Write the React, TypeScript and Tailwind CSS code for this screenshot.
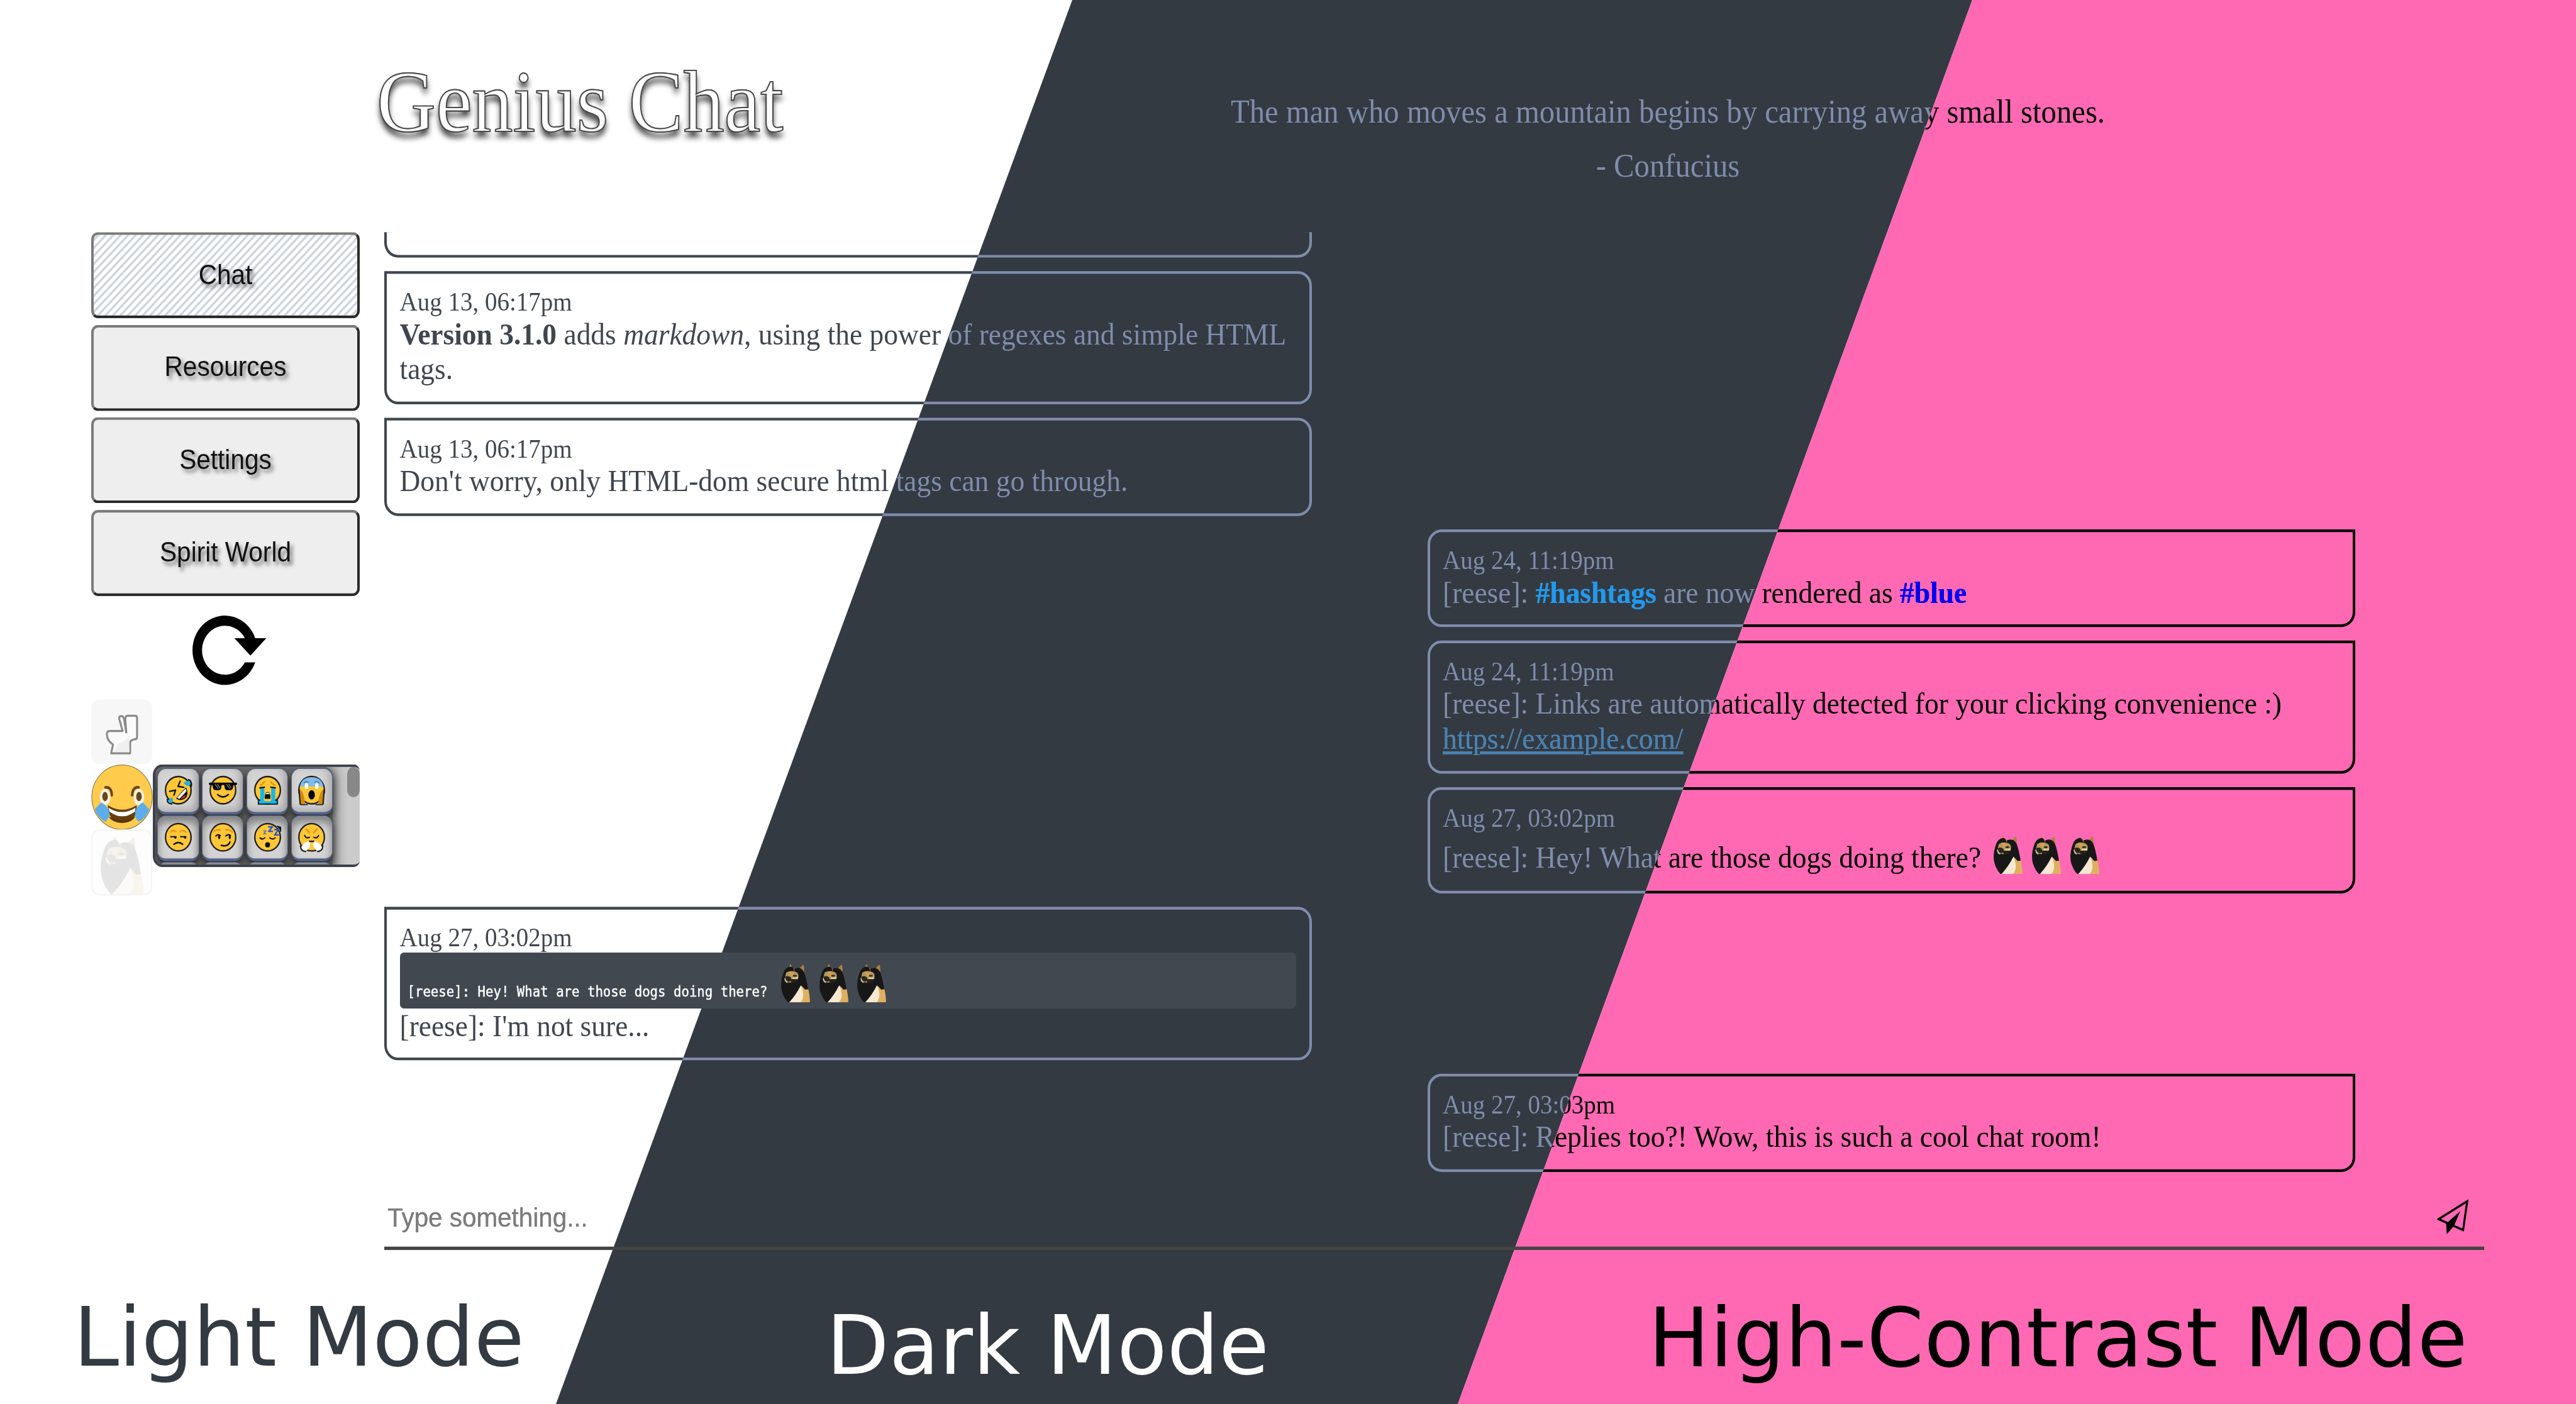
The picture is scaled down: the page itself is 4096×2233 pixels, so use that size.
import React from "react";

type Theme = { page: string; line: string; clip: string };

const THEMES: Theme[] = [
  {
    page: "bg-white",
    line: "border-[#40464e]",
    clip: "[clip-path:polygon(0_0,1705px_0,884px_100%,0_100%)]",
  },
  {
    page: "bg-[#343a42]",
    line: "border-[#7f8dac]",
    clip: "[clip-path:polygon(1705px_0,3136px_0,2318px_100%,884px_100%)]",
  },
  {
    page: "bg-[#ff69b4]",
    line: "border-black",
    clip: "[clip-path:polygon(3136px_0,100%_0,100%_100%,2318px_100%)]",
  },
];

/* ---------- drawings ---------- */

function Dog({ className }: { className: string }) {
  return (
    <svg viewBox="70 66 204 252" preserveAspectRatio="none" className={className}>
      <path d="M128 92 L140 66 L152 90Z" fill="#b98f45" />
      <path d="M196 98 L222 70 Q230 74 230 118Z" fill="#b07f3a" />
      <path d="M130 318 Q165 280 206 205 L232 240 L218 318Z" fill="#f4e8d2" />
      <path d="M210 200 L238 232 L257 232 Q268 285 267 318 L206 318 Q232 285 220 240Z" fill="#e0b060" />
      <path
        d="M142 82 Q104 84 90 135 Q70 195 84 248 Q98 294 124 318 L132 316 Q178 266 208 204 L236 234 L255 230 Q244 160 229 120 Q214 90 186 92 Q168 94 161 102 Q156 84 142 82Z"
        fill="#171717"
      />
      <path d="M112 122 Q135 108 165 114 Q193 120 192 145 Q191 172 172 182 Q140 194 114 182 Q102 168 106 145Z" fill="#b5975c" />
      <path d="M128 114 L160 114 L158 144 L140 148Z" fill="#cfa050" />
      <path d="M104 150 Q125 138 142 154 Q152 176 130 182 Q108 180 104 150Z" fill="#2a2722" />
      <path d="M138 168 Q165 160 192 166 Q182 190 146 192Z" fill="#26221c" />
      <ellipse cx="168" cy="143" rx="13" ry="6" fill="#33291a" />
      <path d="M100 160 Q100 184 122 192 L118 182 Q106 176 106 156Z" fill="#ddd1a4" />
      <path d="M156 151 Q172 158 190 148 L188 163 Q170 166 152 163Z" fill="#ddd1a4" />
      <path d="M161 92 L164 112" stroke="#9b7a3c" strokeWidth="4" />
    </svg>
  );
}

function Dogs() {
  return (
    <>
      {[0, 1, 2].map((i) => (
        <span key={i} className="ml-[11.3px] inline-block h-[45px] w-[49.5px] align-[-8.5px]">
          <Dog className="-mt-[12px] block h-[57px] w-[49.5px]" />
        </span>
      ))}
    </>
  );
}

function RefreshIcon() {
  return (
    <svg viewBox="0 0 120 103" className="h-[103px] w-[120px] overflow-visible">
      <path
        d="M99.8 33.5 A51.5 51.5 0 1 0 99.8 69.5 L83.3 69.5 A36.4 36.4 0 1 1 83.3 33.5 L66.6 33.5 L92.2 59.5 L117.5 33.5Z"
        fill="#000"
      />
    </svg>
  );
}

function ToiletIcon() {
  return (
    <svg viewBox="0 0 100 100" className="size-full">
      <path
        d="M57.7 52 L56 30 Q56 25 60 25 L72 25 Q75.5 25 75.5 29 L75.5 58 Q75.5 61 71 61.5 Q64 62.500 64 67 L64 83 L32.500 83 L35.600 69.500 Q25.500 63 25.500 54 Q25 48.500 30 48.500 L51.500 48.500 L46 30 Q45 25.500 49 25.500 Q53 25 54 31 L57.700 52"
        fill="#fafafa"
        stroke="#8a8a8a"
        strokeWidth="3.200"
        strokeLinejoin="round"
      />
      <path d="M44 68 Q56 66 62 56 L63 81 L37 81Z" fill="#f0f0f0" />
    </svg>
  );
}

function LaughFace() {
  return (
    <svg viewBox="0 0 100 100" className="size-full">
      <circle cx="50" cy="50" r="49" fill="#ffcb4c" stroke="#8f7f58" strokeWidth="1.200" />
      <path d="M23 35 Q33 34 33.500 47" fill="none" stroke="#65471b" strokeWidth="4" strokeLinecap="round" />
      <path d="M77 35 Q67 34 66.500 47" fill="none" stroke="#65471b" strokeWidth="4" strokeLinecap="round" />
      <ellipse cx="22.500" cy="50" rx="8.500" ry="12.500" fill="#f5f0e2" />
      <ellipse cx="77.500" cy="50" rx="8.500" ry="12.500" fill="#f5f0e2" />
      <ellipse cx="22.500" cy="49" rx="4.500" ry="7" fill="#65471b" />
      <ellipse cx="77.500" cy="49" rx="4.500" ry="7" fill="#65471b" />
      <path d="M27 62 Q50 76 74 62 Q74 89 50 89 Q28 89 27 62Z" fill="#65400c" />
      <path d="M28 66 Q50 79 72 66 L71 72 Q50 86 30 72Z" fill="#fff" />
      <path d="M28 79 Q50 91 72 79 Q66 89 50 89 Q34 89 28 79Z" fill="#5a3604" />
      <path d="M16 58 L6 68 Q10 80 22 87 Q30 84 29.500 72 Q25 61 16 58Z" fill="#5dadec" />
      <path d="M84 58 L94 68 Q90 80 78 87 Q70 84 71.500 72 Q75 61 84 58Z" fill="#5dadec" />
    </svg>
  );
}

const FACE = "#ffc636";

function Face({ children }: { children: React.ReactNode }) {
  return (
    <svg viewBox="10 10 52 52" className="h-[45px] w-[45px]" fill="none" strokeLinecap="round" strokeLinejoin="round">
      <circle cx="36" cy="36" r="23.5" fill={FACE} stroke="#1c1c1c" strokeWidth="2.6" />
      {children}
    </svg>
  );
}

const EMOJIS: React.ReactNode[] = [
  <Face>
    <path d="M39.500 20.500 L35.500 29.500 L46 31 M20 38 L31 36 L28 44.500" stroke="#111" strokeWidth="2.600" />
    <path d="M33.500 50 L50 32.500 Q55 45 47 50 Q40 54 33.500 50Z" fill="#111" stroke="#111" strokeWidth="2" />
    <path d="M34 49 L49.500 33 L51 38 L38 51Z" fill="#fff" />
    <path d="M41 51 Q44 45 50 45 Q48 51 41 51Z" fill="#d22f27" />
    <path d="M46 24 Q52 18 57 21 Q60 26 55 29 Q50 29 46 24Z" fill="#1ab2e8" />
    <path d="M55 18 Q61 20 60 29" stroke="#111" strokeWidth="2.500" />
    <path d="M25 48 Q27 55 24 58 Q19 58 18 54 Q20 50 25 48Z" fill="#1ab2e8" />
    <path d="M16 52 Q15 59 24 59.500" stroke="#111" strokeWidth="2.500" />
  </Face>,
  <Face>
    <path d="M12 25 L60 25" stroke="#000" strokeWidth="4" />
    <path d="M16 25 H34 L32.500 33 Q31.500 36 28 36 H23 Q19 36 18 33Z M38 25 H56 L54 33 Q53 36 49 36 H44 Q40.500 36 39.500 33Z" fill="#000" />
    <path d="M22 26 L27 33 M26 26 L30 32 M43 26 L48 33 M47 26 L51 32" stroke="#777" strokeWidth="1.600" />
    <path d="M26 43.500 Q36 52 46 43.500" stroke="#111" strokeWidth="2.600" />
  </Face>,
  <Face>
    <path d="M23 27 Q27 26 30 22 M49 27 Q45 26 42 22" stroke="#e08f1c" strokeWidth="2.500" />
    <path d="M19 53 L54 53 L54 60 L19 60Z" fill="#00b5ea" stroke="#111" strokeWidth="2" />
    <rect x="22.500" y="33" width="7.500" height="26" fill="#12b9ee" />
    <rect x="42.500" y="33" width="7.500" height="26" fill="#12b9ee" />
    <path d="M29 54 Q36 57 43 54 L43 50 L29 50Z" fill={FACE} />
    <path d="M22 32 L30 31 M50 32 L42 31" stroke="#111" strokeWidth="2.600" />
    <path d="M31 51 Q30 39 36 39 Q42 39 41 51Z" fill="#111" />
    <path d="M33 42 Q36 39 39 42Z" fill="#fff" stroke="#fff" strokeWidth="1" />
  </Face>,
  <Face>
    <path d="M14 31 Q17 13.500 36 13.500 Q55 13.500 58 31 Q47 27 36 30 Q25 27 14 31Z" fill="#80bbea" />
    <path d="M13.500 34 Q22 38 24 60 L15 60Z M58.500 34 Q50 38 48 60 L57 60Z" fill="#d28a08" />
    <path d="M13 36 L15 60 M59 36 L57 60" stroke="#1c1c1c" strokeWidth="2.500" />
    <path d="M16 61 H28 M44 61 H56" stroke="#1c1c1c" strokeWidth="2" />
    <rect x="23.500" y="24" width="6" height="10" rx="2" fill="#fff" />
    <rect x="42.500" y="24" width="6" height="10" rx="2" fill="#fff" />
    <path d="M22 24 Q26 19 30 23 M42 23 Q46 19 50 24" stroke="#2c78b8" strokeWidth="1.600" />
    <ellipse cx="36" cy="44" rx="6" ry="8" fill="#000" />
  </Face>,
  <Face>
    <path d="M22 27 Q26 23 32 26 M50 27 Q46 23 40 26" stroke="#e39a1e" strokeWidth="2.800" />
    <path d="M22 35 L32 35 M40 35 L50 35" stroke="#111" strokeWidth="2.200" />
    <path d="M28 35 L32 35 L32 38 Q29 39 28 35Z M46 35 L50 35 L50 38 Q47 39 46 35Z" fill="#111" stroke="#111" strokeWidth="1" />
    <path d="M28 48 Q36 42 44 48" stroke="#111" strokeWidth="2.700" />
  </Face>,
  <Face>
    <path d="M19 27 Q24 21 31 24 M53 27 Q48 21 41 24" stroke="#e39a1e" strokeWidth="2.800" />
    <path d="M23 34 Q26 30 31 33 M41 34 Q45 30 50 33" stroke="#111" strokeWidth="2.300" />
    <ellipse cx="29" cy="36" rx="2" ry="3.200" fill="#111" />
    <ellipse cx="48.500" cy="36" rx="2" ry="3.200" fill="#111" />
    <path d="M33 50 Q45 53 49 44" stroke="#111" strokeWidth="2.700" />
  </Face>,
  <Face>
    <path d="M22 37 Q26 41 31 37 M40 37 Q45 41 50 37" stroke="#111" strokeWidth="2.300" />
    <circle cx="36" cy="49" r="4.500" fill="#111" />
    <path d="M54 17 L60 19 L60 26" fill="#111" stroke="#111" strokeWidth="2" />
    <path d="M29 25 H33 L29 30 H33" stroke="#5d7ca8" strokeWidth="2" />
    <path d="M38 18 H45 L38 26 H45" stroke="#2351e0" strokeWidth="2.600" />
    <path d="M49 23 H56 L49 32 H56" stroke="#2351e0" strokeWidth="2.600" />
  </Face>,
  <Face>
    <path d="M26 22 L32 28 M46 22 L40 28" stroke="#e08f1c" strokeWidth="2.600" />
    <path d="M23 33 Q26 39 32 36 M49 33 Q46 39 40 36" stroke="#111" strokeWidth="2.300" />
    <path d="M32 43 H40" stroke="#111" strokeWidth="2.600" />
    <path d="M31 43 L34 48 Q31 58 24 60 Q17 58 17 53 Q21 45 31 43Z" fill="#fff" />
    <path d="M41 43 L38 48 Q41 58 48 60 Q55 58 55 53 Q51 45 41 43Z" fill="#fff" />
    <path d="M15.500 51 Q16 60 25 60.500 M56.500 51 Q56 60 47 60.500" stroke="#1c1c1c" strokeWidth="2.400" />
  </Face>,
];

function SendIcon() {
  return (
    <svg viewBox="0 0 51 51" preserveAspectRatio="none" className="h-[52px] w-[51px]">
      <path d="M2.500 28.500 L48 2.500 L41.500 44.500Z" fill="none" stroke="#000" strokeWidth="3.200" strokeLinejoin="miter" />
      <path d="M14.500 35 L37 17 L27 38.500 L15.500 50.500Z" fill="#000" />
    </svg>
  );
}

/* ---------- messages ---------- */

type Message = { height: string; side: "left" | "right"; body: React.ReactNode };

function Line({ children, className = "" }: { children: React.ReactNode; className?: string }) {
  return <p className={"text-[45.46px] leading-[52.3px] " + className}>{children}</p>;
}

function Time({ children }: { children: string }) {
  return <p className="text-[39px] leading-[44px]">{children}</p>;
}

const MESSAGES: Message[] = [
  {
    height: "h-[198px]",
    side: "left",
    body: (
      <>
        <Time>Aug 13, 06:17pm</Time>
        <Line>
          <b>Version 3.1.0</b> adds <i>markdown</i>, using the power of regexes and simple HTML tags.
        </Line>
      </>
    ),
  },
  {
    height: "h-[145.6px]",
    side: "left",
    body: (
      <>
        <Time>Aug 13, 06:17pm</Time>
        <Line>Don't worry, only HTML-dom secure html tags can go through.</Line>
      </>
    ),
  },
  {
    height: "h-[145.6px]",
    side: "right",
    body: (
      <>
        <Time>Aug 24, 11:19pm</Time>
        <Line>
          [reese]: <b className="text-[#1d9bf0]">#hashtags</b> are now rendered as{" "}
          <b className="text-[#0000ff]">#blue</b>
        </Line>
      </>
    ),
  },
  {
    height: "h-[197.6px]",
    side: "right",
    body: (
      <>
        <Time>Aug 24, 11:19pm</Time>
        <Line>[reese]: Links are automatically detected for your clicking convenience :)</Line>
        <Line>
          <a className="text-[#4682b4] underline decoration-[4px] underline-offset-[4px]">https://example.com/</a>
        </Line>
      </>
    ),
  },
  {
    height: "h-[158px]",
    side: "right",
    body: (
      <>
        <Time>Aug 27, 03:02pm</Time>
        <Line className="mt-[11.5px] whitespace-nowrap">
          [reese]: Hey! What are those dogs doing there?
          <span className="ml-[7px]" />
          <Dogs />
        </Line>
      </>
    ),
  },
  {
    height: "h-[228.6px]",
    side: "left",
    body: (
      <>
        <Time>Aug 27, 03:02pm</Time>
        <p className="mr-px h-[83px] rounded-[6px] bg-[#414850] pt-[29px] pl-[12px] font-['DejaVu_Sans_Mono',monospace] text-[20.7px] leading-[48px] whitespace-nowrap text-white [-webkit-text-stroke:0.4px_white]">
          [reese]: Hey! What are those dogs doing there?
          <span className="ml-[8px]" />
          <Dogs />
        </p>
        <Line>[reese]: I'm not sure...</Line>
      </>
    ),
  },
  {
    height: "h-[145.6px]",
    side: "right",
    body: (
      <>
        <Time>Aug 27, 03:03pm</Time>
        <Line>[reese]: Replies too?! Wow, this is such a cool chat room!</Line>
      </>
    ),
  },
];

/* The thread is laid out twice: as bare frames inside each theme, and as text over all of them. */
function Thread({ line }: { line?: string }) {
  const border = line ?? "border-transparent";
  return (
    <div className="flex w-[3133.5px] flex-col gap-[20px]">
      <div className={"h-[38px] w-[1475px] rounded-b-[22px] border-4 border-t-0 " + border} />
      {MESSAGES.map((m, i) => (
        <div
          key={i}
          className={[
            "w-[1475px] border-4 pt-[20px] pr-[20px] pl-[20.5px]",
            m.height,
            m.side === "left"
              ? "self-start rounded-[22px] rounded-tl-none"
              : "self-end rounded-[22px] rounded-tr-none",
            border,
          ].join(" ")}
        >
          {line ? null : m.body}
        </div>
      ))}
    </div>
  );
}

function ThemePane({ theme }: { theme: Theme }) {
  return (
    <div className={"absolute inset-0 pt-[345px] pl-[611px] " + theme.page + " " + theme.clip}>
      <Thread line={theme.line} />
    </div>
  );
}

/* ---------- sidebar ---------- */

function NavButton({ label, active }: { label: string; active?: boolean }) {
  return (
    <button
      className={
        "h-[128px] w-[427px] rounded-[11px] border-[4.3px] border-t-[#7b7b7b] border-r-[#2b2b2b] border-b-[#2b2b2b] border-l-[#7b7b7b] pb-[2px] text-[40.6px] text-[#111] [text-shadow:4px_5px_6px_rgba(0,0,0,0.55)] " +
        (active
          ? "bg-[repeating-linear-gradient(-45deg,#ffffff_0,#ffffff_3.6px,#cdd4e1_5px,#cdd4e1_7px,#ffffff_8.4px)]"
          : "bg-[#eeeeee]")
      }
    >
      {label}
    </button>
  );
}

function EmojiPanel() {
  return (
    <div className="flex h-[153px] w-[329px] overflow-hidden rounded-l-[16px] rounded-r-[10px] border-[4.5px] border-r-0 border-[#3a414b] bg-[#c9c9c9]">
      <div className="flex-1">
        <div className="grid h-[160px] w-[282px] grid-cols-4 gap-x-[4.5px] gap-y-px rounded-r-[14px] bg-[#6a6a6a] pt-[2px] pl-[3px] shadow-[4px_0_16px_rgba(0,0,0,0.55)]">
          {EMOJIS.map((e, i) => (
            <div
              key={i}
              className={
                "flex h-[68.5px] w-[66.500px] items-center justify-center rounded-[14px] border border-b-[4px] border-[#56668c] bg-[#d3d3d3] " +
                (i < 4
                  ? "shadow-[0_6px_12px_rgba(0,0,0,0.65),inset_-5px_-4px_12px_rgba(0,0,0,0.2)]"
                  : "shadow-[0_6px_12px_rgba(0,0,0,0.65),inset_0_9px_12px_rgba(0,0,0,0.4)]")
              }
            >
              {e}
            </div>
          ))}
          {[0, 1, 2, 3].map((i) => (
            <div key={i} className="h-[20px] w-[66.5px] rounded-t-[14px] border border-[#56668c] bg-[#8b8b8b]" />
          ))}
        </div>
      </div>
      <div className="w-[20px] bg-[#cbcbcb]">
        <div className="h-[45px] rounded-[10px] bg-[#888888]" />
      </div>
    </div>
  );
}

function Sidebar() {
  return (
    <aside className="flex w-[427px] flex-col font-['Liberation_Sans',Arial,sans-serif]">
      <nav className="flex flex-col gap-[9.7px]">
        <NavButton label="Chat" active />
        <NavButton label="Resources" />
        <NavButton label="Settings" />
        <NavButton label="Spirit World" />
      </nav>
      <div className="mt-[29px] pl-[161px]">
        <RefreshIcon />
      </div>
      <div className="mt-[22px] h-[96px] w-[97px] rounded-[13px] bg-[#f7f7f7]">
        <ToiletIcon />
      </div>
      <div className="flex">
        <div className="size-[98px]">
          <LaughFace />
        </div>
        <EmojiPanel />
      </div>
      <div className="-mt-[56px] h-[98px] w-[97px] rounded-[13px] border-2 border-[#f4f4f4] bg-[#fdfdfd] pt-[8px] pl-[10px]">
        <Dog className="h-[86px] w-[74px] opacity-10" />
      </div>
    </aside>
  );
}

/* ---------- page ---------- */

export default function App() {
  return (
    <main className="relative h-[2233px] w-[4096px] overflow-hidden bg-white">
      <div className="relative h-[2087px] w-[4096px] origin-top scale-y-[1.07]">
        {THEMES.map((t) => (
          <ThemePane key={t.page} theme={t} />
        ))}

        <div className="absolute inset-0 bg-[linear-gradient(111.44deg,#40464e_1587px,#7f8dac_1588px,#7f8dac_2919px,#000000_2920px)] bg-clip-text font-['Liberation_Serif','Times_New_Roman',serif] text-transparent">
          <header className="flex h-[345px]">
            <h1 className="w-[1360px] pt-[78px] pl-[599px] text-[130px] leading-[146px] whitespace-nowrap text-white [-webkit-text-stroke:1.800px_#4a4a4a] [text-shadow:0_9px_9px_rgba(0,0,0,0.8)]">
              Genius Chat
            </h1>
            <div className="w-[2584px] pt-[126px] text-center text-[48.700px] leading-[81px]">
              <p>The man who moves a mountain begins by carrying away small stones.</p>
              <p>- Confucius</p>
            </div>
          </header>

          <div className="flex gap-[39px] pl-[145px]">
            <Sidebar />
            <div className="flex w-[3339px] flex-col">
              <Thread />
              <div className="mt-[36px] flex h-[80px] items-start justify-between border-b-[5px] border-[#444444] pr-[24px] pl-[5px] font-['Liberation_Sans',Arial,sans-serif] text-[40.400px]">
                <span className="pt-[8px] leading-[46px] text-[#7d7d7d]">Type something...</span>
                <span className="pt-[5px]">
                  <SendIcon />
                </span>
              </div>
            </div>
          </div>
        </div>
      </div>

      <footer className="absolute bottom-0 left-0 grid h-[171px] w-full grid-cols-[1197px_1307px_1fr] pl-[117px] font-['DejaVu_Sans',Verdana,sans-serif] text-[129.400px] leading-none whitespace-nowrap">
        <span className="pt-[1px] text-[#343a42]">Light Mode</span>
        <span className="pt-[14px] tracking-[0.4px] text-white">Dark Mode</span>
        <span className="pt-[2px] tracking-[0.7px] text-black">High-Contrast Mode</span>
      </footer>
    </main>
  );
}
